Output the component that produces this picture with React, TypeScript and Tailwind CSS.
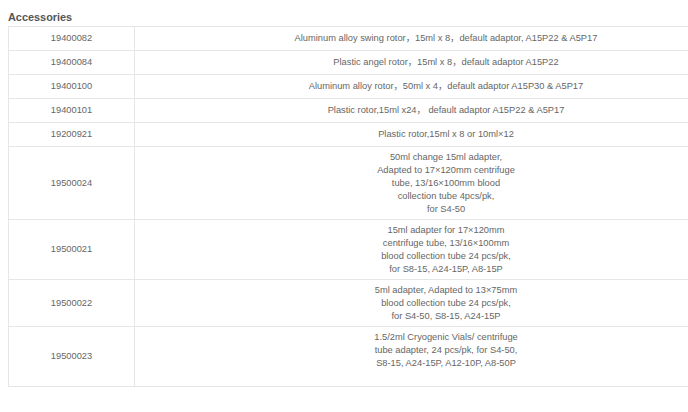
import React from "react";

const rows: { id: string; lines: string[]; extra?: boolean }[] = [
  { id: "19400082", lines: ["Aluminum alloy swing rotor，15ml x 8，default adaptor, A15P22 & A5P17"] },
  { id: "19400084", lines: ["Plastic angel rotor，15ml x 8，default adaptor A15P22"] },
  { id: "19400100", lines: ["Aluminum alloy rotor，50ml x 4，default adaptor A15P30 & A5P17"] },
  { id: "19400101", lines: ["Plastic rotor,15ml x24， default adaptor A15P22 & A5P17"] },
  { id: "19200921", lines: ["Plastic rotor,15ml x 8 or 10ml×12"] },
  {
    id: "19500024",
    lines: [
      "50ml change 15ml adapter,",
      "Adapted to 17×120mm centrifuge",
      "tube, 13/16×100mm blood",
      "collection tube 4pcs/pk,",
      "for S4-50",
    ],
  },
  {
    id: "19500021",
    lines: [
      "15ml adapter for 17×120mm",
      "centrifuge tube, 13/16×100mm",
      "blood collection tube 24 pcs/pk,",
      "for S8-15, A24-15P, A8-15P",
    ],
  },
  {
    id: "19500022",
    lines: [
      "5ml adapter, Adapted to 13×75mm",
      "blood collection tube 24 pcs/pk,",
      "for S4-50, S8-15, A24-15P",
    ],
  },
  {
    id: "19500023",
    lines: [
      "1.5/2ml Cryogenic Vials/ centrifuge",
      "tube adapter, 24 pcs/pk, for S4-50,",
      "S8-15, A24-15P, A12-10P, A8-50P",
    ],
    extra: true,
  },
];

export default function App() {
  return (
    <div
      className="w-[688px] h-[412px] overflow-hidden bg-white"
      style={{ fontFamily: '"Liberation Sans", Arial, "Noto Sans CJK SC", sans-serif' }}
    >
      <div className="pl-[8px] pt-[10px]">
        <div className="text-[10.9px] leading-[14px] font-bold text-[#555] mb-[2px]">Accessories</div>
        <table className="w-[750px] border-collapse text-[9.3px] leading-[13px] text-[#666]">
          <tbody>
            {rows.map((r) => (
              <tr key={r.id} className="h-[24px]">
                <td className="w-[126px] border border-[#e6e6e6] text-center align-middle py-[3.5px]">{r.id}</td>
                <td className="border border-[#e6e6e6] text-center align-middle py-[3.5px]">
                  {r.lines.map((l, i) => (
                    <div key={i} className="whitespace-pre">{l}</div>
                  ))}
                  {r.extra && <div>&nbsp;</div>}
                </td>
              </tr>
            ))}
          </tbody>
        </table>
      </div>
    </div>
  );
}
